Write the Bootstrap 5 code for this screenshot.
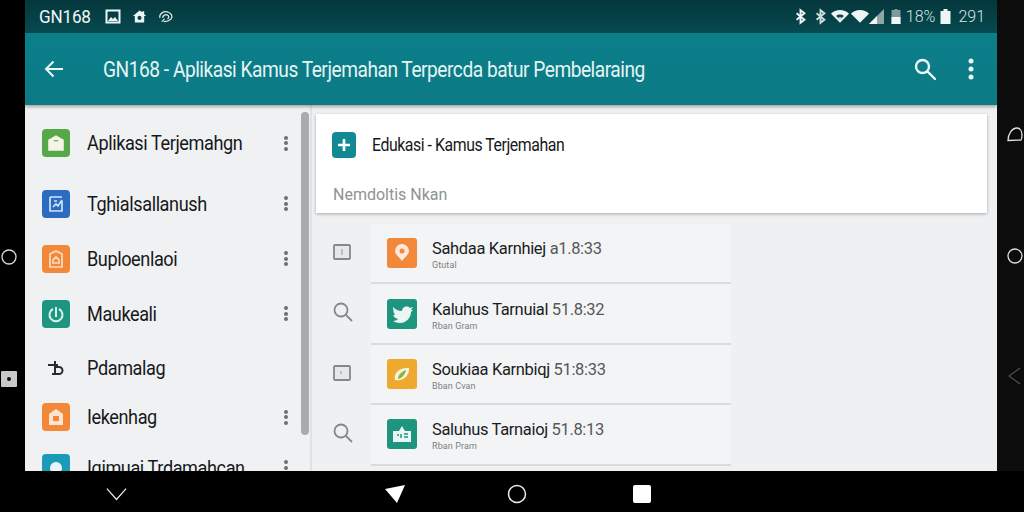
<!DOCTYPE html>
<html lang="id">
  <head>
    <meta charset="UTF-8" />
    <meta name="viewport" content="width=device-width, initial-scale=1.0" />
    <title>GN168</title>
    <link href="https://cdn.jsdelivr.net/npm/bootstrap@5.3.0/dist/css/bootstrap.min.css" rel="stylesheet" />
    <style>
      html, body { width: 1024px; height: 512px; overflow: hidden; background: #000; font-family: Roboto, "Liberation Sans", sans-serif; }
      .shell { height: 471px; }
      .rail-left { width: 25px; background: #000; }
      .rail-right { width: 27px; background: #0c0c0c; }
      .rail-left svg, .rail-right svg { display: block; }
      .rail-circle { margin: 248px 0 0 1px; }
      .rail-tag { margin: 105px 0 0 1px; width: 16px; height: 16px; background: #c9c9cb; display: flex; align-items: center; justify-content: center; border-radius: 1px; }
      .rail-tag i { width: 4px; height: 4px; border-radius: 50%; background: #111; }
      .rail-d { margin: 127px 0 0 10px; }
      .rail-o { margin: 106px 0 0 10px; }
      .rail-back { margin: 103px 0 0 11px; }
      .screen { width: 972px; min-width: 0; }
      .status-bar { height: 33px; background: linear-gradient(#04373c, #064a50); color: #f0f6f6; padding: 0 12px 0 14px; }
      .status-name { font-size: 18px; line-height: 1; margin-right: 14px; width: 52px; letter-spacing: -.2px; white-space: nowrap; transform: scaleX(.95); transform-origin: left; }
      .status-num { font-size: 16px; line-height: 1; color: #d6e4e5; letter-spacing: 0; font-weight: 300; }
      .gap-11 { margin-left: 11px; }
      .gap-2px { margin-left: 2px; }
      .gap-5 { margin-left: 5px; }
      .gap-7 { margin-left: 7px; }
      .gap-9 { margin-left: 9px; }
      .app-bar { height: 72px; background: linear-gradient(#0a7f8a, #0c7a84); color: #e6f4f5; padding: 0 23px 0 19px; box-shadow: 0 2px 3px rgba(0,0,0,.3); position: relative; z-index: 2; }
      .app-title { font-size: 22px; line-height: 1; margin: 2px 0 0 39px; letter-spacing: -.55px; white-space: nowrap; transform: scaleX(.87); transform-origin: left; }
      .app-more { margin-left: 31px; }
      .content { height: 366px; background: #eff0f2; }
      .side-panel { width: 276px; padding-top: 7px; background: #f0f1f3; overflow: hidden; }
      .side-row { height: 55px; padding: 0 10px 0 17px; background: transparent; border: 0; color: #16191a; font-size: 20px; letter-spacing: -.45px; white-space: nowrap; }
      .side-row.tall { height: 62px; }
      .side-row.lower { margin-top: 2px; }
      .side-row.mid { height: 53px; }
      .side-row.short { height: 46px; }
      .side-text { margin-left: 17px; line-height: 1; transform: scaleX(.905); transform-origin: left; }
      .tile { width: 28px; height: 28px; border-radius: 4px; flex: none; color: #fff; display: flex; align-items: center; justify-content: center; }
      .tile-green { background: #55a948; }
      .tile-blue { background: #2c6cc0; }
      .tile-orange { background: #f3873a; }
      .tile-teal { background: #1f947f; }
      .tile-cyan { background: #1b9bb7; }
      .tile-plain { color: #2a2d2e; }
      .kebab { display: flex; flex-direction: column; gap: 1.500px; margin-left: auto; margin-right: 3px; }
      .kebab i { width: 4px; height: 4px; border-radius: 50%; background: #6d7173; }
      .scroll-track { width: 11px; background: #f0f1f3; border-right: 2px solid #dfe1e3; padding: 7px 0 0 0; }
      .scroll-thumb { width: 8px; height: 323px; border-radius: 4px; background: #a9abad; }
      .main-panel { padding: 9px 10px 0 4px; min-width: 0; }
      .head-card { height: 99px; border: 0; border-radius: 0; background: #fff; box-shadow: 0 1px 3px rgba(0,0,0,.3); padding: 18px 16px 0; }
      .plus-tile { width: 24px; height: 26px; border-radius: 4px; background: #128a94; }
      .head-title { font-size: 18px; line-height: 1; margin-left: 16px; letter-spacing: -.5px; color: #17191a; white-space: nowrap; transform: scaleX(.88); transform-origin: left; }
      .head-sub { font-size: 16px; line-height: 1; color: #8f9294; margin: 29px 0 0 1px; letter-spacing: 0; }
      .rows { margin-top: 11px; }
      .row-wrap { height: 60.4px; }
      .row-mark { width: 55px; color: #85888a; padding: 0 0 6px 17px; flex: none; }
      .row-body { width: 360px; height: 100%; background: #f3f4f5; border-bottom: 2px solid #d9dbdd; padding: 0 16px; }
      .app-tile { width: 30px; height: 30px; border-radius: 3px; flex: none; color: #fff; display: flex; align-items: center; justify-content: center; }
      .tile-amber { background: #eeaa2e; }
      .row-text { margin-left: 15px; margin-top: 4px; }
      .row-title { font-size: 17px; line-height: 18px; letter-spacing: -.35px; color: #1a1c1d; white-space: nowrap; transform: scaleX(.97); transform-origin: left; }
      .row-title span { color: #55585a; }
      .row-sub { font-size: 9px; line-height: 11px; color: #7d8082; letter-spacing: .1px; margin-top: 3px; }
      .nav-bottom { height: 41px; background: #000; padding: 5px 0 0 106px; }
      .nav-tri { margin-left: 258px; }
      .nav-home { margin-left: 102px; }
      .nav-square { margin-left: 106px; width: 18px; height: 18px; border-radius: 2px; background: #fff; }
    </style>
  </head>
  <body>
    <div class="shell d-flex">
      <div class="rail-left flex-shrink-0">
        <svg class="rail-circle" width="18" height="18" viewBox="0 0 18 18"><circle cx="8" cy="9" r="7" fill="none" stroke="#d8d8d8" stroke-width="1.3"/></svg>
        <div class="rail-tag"><i></i></div>
      </div>

      <div class="screen flex-shrink-0">
        <div class="status-bar d-flex align-items-center">
          <span class="status-name">GN168</span>
          <svg width="16" height="15" viewBox="0 0 16 15"><rect x="1.500" y="1.500" width="13" height="12" fill="none" stroke="#eef5f5" stroke-width="2"/><path d="M3 12l3-4 2 2 2-2 3 4z" fill="#eef5f5"/></svg>
          <svg class="gap-11" width="15" height="15" viewBox="0 0 16 15"><path d="M8 1L1 7h2v7h10V7h2l-2-2V2h-2v1z" fill="#eef5f5"/><circle cx="8" cy="9" r="2.200" fill="#0a4a50"/></svg>
          <svg class="gap-11" width="16" height="15" viewBox="0 0 17 15" fill="none" stroke="#dfeaeb" stroke-width="1.300"><path d="M2 9c-1-5 5-8 9-6 3 1 5 4 3 7-2 2-5 3-8 3"/><path d="M5 9c0-3 3-4 5-3s2 3 0 4"/><path d="M4 13l3-3"/></svg>
          <div class="d-flex align-items-center ms-auto">
            <svg width="11" height="17" viewBox="0 0 14 18" fill="none" stroke="#eef5f5" stroke-width="2.400"><path d="M2 5l10 8-5 4V1l5 4-10 8"/></svg>
            <svg class="gap-9" width="11" height="17" viewBox="0 0 14 18" fill="none" stroke="#cfdcdd" stroke-width="2.400"><path d="M2 5l10 8-5 4V1l5 4-10 8"/></svg>
            <svg class="gap-5" width="18" height="15" viewBox="0 0 19 15"><path d="M9.500 14L0 4.500C5-.5 14-.5 19 4.500z" fill="#eef5f5"/><path d="M9.500 11L5.500 7c2-2 6-2 8 0z" fill="#0a4a50"/><path d="M9.500 11L7.500 9c1-1 3-1 4 0z" fill="#eef5f5"/></svg>
            <svg class="gap-2px" width="18" height="15" viewBox="0 0 19 15"><path d="M9.500 14L0 4.500C5-.5 14-.5 19 4.500z" fill="#eef5f5"/></svg>
            <svg width="15" height="15" viewBox="0 0 15 15"><path d="M0 15L15 0v15z" fill="#8fa5a7"/><path d="M0 15L8 7v8z" fill="#eef5f5"/></svg>
            <svg class="gap-7" width="10" height="15" viewBox="0 0 9 15"><rect y="1" width="9" height="14" fill="#7f9a9c"/><rect x="3" width="3" height="2" fill="#7f9a9c"/><rect y="8" width="9" height="7" fill="#eef5f5"/></svg>
            <span class="status-num gap-5">18%</span>
            <svg class="gap-5" width="11" height="15" viewBox="0 0 10 15"><rect y="2" width="10" height="13" fill="#eef5f5"/><rect x="3" width="4" height="3" fill="#eef5f5"/></svg>
            <span class="status-num gap-7">291</span>
          </div>
        </div>

        <div class="app-bar d-flex align-items-center">
          <svg width="20" height="20" viewBox="0 0 20 20" fill="none" stroke="#eef8f8" stroke-width="2"><path d="M19 10H2M9.500 2.500L2 10l7.500 7.500"/></svg>
          <span class="app-title">GN168 - Aplikasi Kamus Terjemahan Terpercda batur Pembelaraing</span>
          <svg class="ms-auto" width="24" height="24" viewBox="0 0 24 24" fill="none" stroke="#eef8f8" stroke-width="2.400"><circle cx="9.500" cy="9.500" r="6.500"/><path d="M14.500 14.500L22 22" stroke-linecap="round"/></svg>
          <svg class="app-more" width="6" height="22" viewBox="0 0 6 22" fill="#eef8f8"><circle cx="3" cy="3" r="2.500"/><circle cx="3" cy="11" r="2.500"/><circle cx="3" cy="19" r="2.500"/></svg>
        </div>

        <div class="content d-flex">
          <div class="side-panel flex-shrink-0">
            <div class="list-group rounded-0">
              <div class="list-group-item side-row tall d-flex align-items-center">
                <div class="tile tile-green"><svg width="20" height="20" viewBox="0 0 18 18"><path d="M2 6l7-4 7 4v10H2z" fill="#f6f4e4"/><path d="M7 7h4" stroke="#55a948"/></svg></div>
                <span class="side-text">Aplikasi Terjemahgn</span>
                <div class="kebab"><i></i><i></i><i></i></div>
              </div>
              <div class="list-group-item side-row lower d-flex align-items-center">
                <div class="tile tile-blue"><svg width="20" height="18" viewBox="0 0 20 18" fill="none" stroke="#cfe4f7" stroke-width="1.700"><path d="M4 2h12M4 2v14h12V6M7 12l3-3 2 2 4-6M8 6h3"/></svg></div>
                <span class="side-text">Tghialsallanush</span>
                <div class="kebab"><i></i><i></i><i></i></div>
              </div>
              <div class="list-group-item side-row d-flex align-items-center">
                <div class="tile tile-orange"><svg width="16" height="20" viewBox="0 0 16 20" fill="none" stroke="#fbdcc4" stroke-width="1.700"><path d="M2 5l6-3 6 3v13H2z"/><path d="M5 11l3-3 3 3v3H5z"/></svg></div>
                <span class="side-text">Buploenlaoi</span>
                <div class="kebab"><i></i><i></i><i></i></div>
              </div>
              <div class="list-group-item side-row d-flex align-items-center">
                <div class="tile tile-teal"><svg width="18" height="18" viewBox="0 0 18 18" fill="none" stroke="#d5f1ea" stroke-width="2"><path d="M6 4a6.500 6.500 0 1 0 6 0"/><path d="M9 2v10"/></svg></div>
                <span class="side-text">Maukeali</span>
                <div class="kebab"><i></i><i></i><i></i></div>
              </div>
              <div class="list-group-item side-row mid d-flex align-items-center">
                <div class="tile tile-plain"><svg width="18" height="16" viewBox="0 0 18 16" fill="none" stroke="currentColor" stroke-width="2"><path d="M1 5h10M8 1v13M8 7h4a3.500 3.500 0 0 1 0 7H5"/></svg></div>
                <span class="side-text">Pdamalag</span>
              </div>
              <div class="list-group-item side-row short d-flex align-items-center">
                <div class="tile tile-orange"><svg width="16" height="18" viewBox="0 0 16 18"><path d="M1 6l7-5 7 5v11H1z" fill="#fde5d3"/><path d="M5 8h6v5H5z" fill="#f3873a"/></svg></div>
                <span class="side-text">Iekenhag</span>
                <div class="kebab"><i></i><i></i><i></i></div>
              </div>
              <div class="list-group-item side-row d-flex align-items-center">
                <div class="tile tile-cyan"><svg width="16" height="16" viewBox="0 0 16 16"><circle cx="8" cy="8" r="6" fill="#e8f6f9"/></svg></div>
                <span class="side-text">Iqimuai Trdamahcan</span>
                <div class="kebab"><i></i><i></i><i></i></div>
              </div>
            </div>
          </div>
          <div class="scroll-track flex-shrink-0"><div class="scroll-thumb"></div></div>

          <div class="main-panel flex-grow-1">
            <div class="card head-card">
              <div class="d-flex align-items-center">
                <div class="plus-tile d-flex align-items-center justify-content-center">
                  <svg width="14" height="14" viewBox="0 0 14 14" stroke="#fff" stroke-width="2.600"><path d="M7 1v12M1 7h12"/></svg>
                </div>
                <span class="head-title">Edukasi - Kamus Terjemahan</span>
              </div>
              <div class="head-sub">Nemdoltis Nkan</div>
            </div>

            <div class="rows">
              <div class="row-wrap d-flex align-items-center">
                <div class="row-mark"><svg width="18" height="18" viewBox="0 0 18 18" fill="#e6e7e9" stroke="#85888a" stroke-width="1.800"><rect x="1" y="2" width="16" height="14" rx="1"/><path d="M9 6v6" stroke="#b9bbbd"/></svg></div>
                <div class="row-body d-flex align-items-center">
                  <div class="app-tile tile-orange"><svg width="16" height="18" viewBox="0 0 16 18"><path d="M8 17C4 12 1 10 1 7a7 7 0 0 1 14 0c0 3-3 5-7 10z" fill="#fde9db"/><circle cx="8" cy="7" r="2.500" fill="#f3873a"/></svg></div>
                  <div class="row-text"><div class="row-title">Sahdaa Karnhiej <span>a1.8:33</span></div><div class="row-sub">Gtutal</div></div>
                </div>
              </div>
              <div class="row-wrap d-flex align-items-center">
                <div class="row-mark"><svg width="20" height="20" viewBox="0 0 20 20" fill="none" stroke="#85888a" stroke-width="1.800"><circle cx="8" cy="8" r="6.500"/><path d="M13 13l6 6"/></svg></div>
                <div class="row-body d-flex align-items-center">
                  <div class="app-tile tile-teal"><svg width="21" height="18" viewBox="0 0 21 18"><path d="M1 2c3 3 6 4 9 4 0-4 5-6 8-3l3-1-2 3 2 0-2 2c0 6-5 11-11 11-3 0-5-1-7-2 2 0 4-1 5-2-3-1-4-2-5-4h2C2 8 1 6 1.500 5 1 4 1 3 1 2z" fill="#e9f6f3"/></svg></div>
                  <div class="row-text"><div class="row-title">Kaluhus Tarnuial <span>51.8:32</span></div><div class="row-sub">Rban Gram</div></div>
                </div>
              </div>
              <div class="row-wrap d-flex align-items-center">
                <div class="row-mark"><svg width="18" height="18" viewBox="0 0 18 18" fill="#e6e7e9" stroke="#85888a" stroke-width="1.800"><rect x="1" y="2" width="16" height="14" rx="1"/><path d="M8 7v3" stroke="#b9bbbd"/></svg></div>
                <div class="row-body d-flex align-items-center">
                  <div class="app-tile tile-amber"><svg width="20" height="18" viewBox="0 0 20 18"><path d="M3 15C1 9 7 2 17 3c1 7-6 14-14 12z" fill="#f5f3d9"/><path d="M6 14C6 10 9 7 14 5c-1 5-4 8-8 9z" fill="#8bb13f"/></svg></div>
                  <div class="row-text"><div class="row-title">Soukiaa Karnbiqj <span>51:8:33</span></div><div class="row-sub">Bban Cvan</div></div>
                </div>
              </div>
              <div class="row-wrap d-flex align-items-center">
                <div class="row-mark"><svg width="20" height="20" viewBox="0 0 20 20" fill="none" stroke="#85888a" stroke-width="1.800"><circle cx="8" cy="8" r="6.500"/><path d="M13 13l6 6"/></svg></div>
                <div class="row-body d-flex align-items-center">
                  <div class="app-tile tile-teal"><svg width="20" height="18" viewBox="0 0 20 18"><path d="M1 6h6l3-5 3 5h6v11H1z" fill="#e9f6f3"/><path d="M5 10h2M9 9v4M12 9h4M12 12h4" stroke="#1f947f" stroke-width="1.500"/></svg></div>
                  <div class="row-text"><div class="row-title">Saluhus Tarnaioj <span>51.8:13</span></div><div class="row-sub">Rban Pram</div></div>
                </div>
              </div>
            </div>
          </div>
        </div>
      </div>

      <div class="rail-right flex-shrink-0">
        <svg class="rail-d" width="16" height="15" viewBox="0 0 16 15"><path d="M1 13.500C1 7 5 1 10 1c3 0 5 3 5 7 0 2 0 4-1 5z" fill="none" stroke="#e2e2e2" stroke-width="1.300"/></svg>
        <svg class="rail-o" width="16" height="16" viewBox="0 0 16 16"><circle cx="8" cy="8" r="7" fill="none" stroke="#dcdcdc" stroke-width="1.300"/></svg>
        <svg class="rail-back" width="13" height="18" viewBox="0 0 13 18"><path d="M12 1L1 9l11 8" fill="none" stroke="#4e4e4e" stroke-width="1.300"/></svg>
      </div>
    </div>

    <div class="nav-bottom d-flex align-items-center">
      <svg width="21" height="15" viewBox="0 0 23 15"><path d="M1 1l10.500 12L22 1" fill="none" stroke="#e8e8e8" stroke-width="1.400"/></svg>
      <svg class="nav-tri" width="20" height="18" viewBox="0 0 20 18"><path d="M0 4L20 0 12 18z" fill="#fff"/></svg>
      <svg class="nav-home" width="20" height="20" viewBox="0 0 20 20"><circle cx="10" cy="10" r="8.500" fill="none" stroke="#eee" stroke-width="1.500"/></svg>
      <div class="nav-square"></div>
    </div>

    <script src="https://cdn.jsdelivr.net/npm/bootstrap@5.3.0/dist/js/bootstrap.bundle.min.js"></script>
  </body>
</html>
